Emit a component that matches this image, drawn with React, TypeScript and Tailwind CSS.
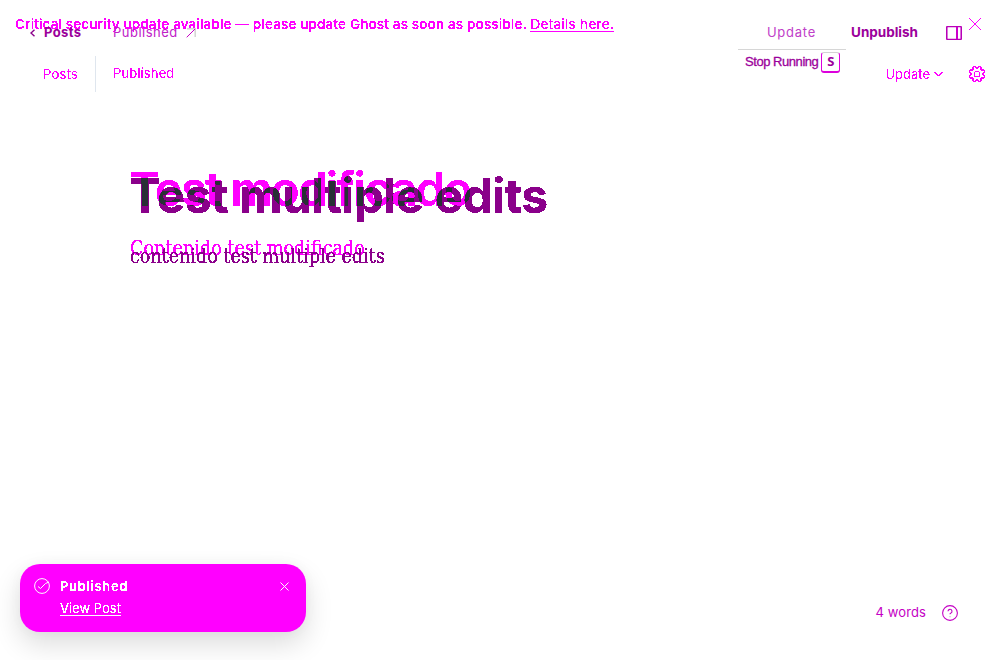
import React from "react";

/* Colour and edge treatments shared by the two compared layers. */
function Filters() {
  return (
    <svg width="0" height="0" className="absolute" aria-hidden="true">
      <filter id="crisp" colorInterpolationFilters="sRGB">
        <feComponentTransfer>
          <feFuncA type="discrete" tableValues="0 0 0 0 1 1 1 1 1 1" />
        </feComponentTransfer>
      </filter>
      <filter id="crisp-heavy" colorInterpolationFilters="sRGB">
        <feComponentTransfer>
          <feFuncA type="discrete" tableValues="0 0 0 1 1 1 1 1 1 1" />
        </feComponentTransfer>
      </filter>
      {/* Where both headings cross, the difference blend leaves a mid tone that is mapped to slate. */}
      <filter id="overlap" colorInterpolationFilters="sRGB">
        <feColorMatrix values="1 0 0 0 0  1 0 0 0 0  1 0 0 0 0  0 0 0 1 0" />
        <feComponentTransfer>
          <feFuncR type="discrete" tableValues=".16 .16 .16 .16 .16 .16 .16 .16 .16 .16 .545 .545 .545 .545 1 1 1 1 1 1" />
          <feFuncG type="discrete" tableValues=".19 .19 .19 .19 .19 .19 .19 .19 .19 .19 0 0 0 0 0 0 0 0 0 0" />
          <feFuncB type="discrete" tableValues=".21 .21 .21 .21 .21 .21 .21 .21 .21 .21 .545 .545 .545 .545 1 1 1 1 1 1" />
          <feFuncA type="discrete" tableValues="0 0 0 1 1 1 1 1 1 1" />
        </feComponentTransfer>
      </filter>
    </svg>
  );
}

function Banner() {
  return (
    <div className="flex h-12 items-center justify-between pl-[15px] pr-[18px] text-[13.5px] text-[#ff00ff]">
      <p className="whitespace-nowrap pt-px [filter:url(#crisp-heavy)]">
        <span className="font-medium tracking-[0.17px]">
          Critical security update available — please update Ghost as soon as possible.
        </span>{" "}
        <a className="tracking-[0.3px] underline underline-offset-2">Details here.</a>
      </p>
      <svg width="14" height="14" viewBox="0 0 14 14" fill="none" stroke="currentColor" strokeWidth="1">
        <path d="M1 1l12 12M13 1L1 13" />
      </svg>
    </div>
  );
}

const TEETH = 8;
const gearPoints = Array.from({ length: TEETH }, (_, i) => {
  const mid = (i * 2 * Math.PI) / TEETH + Math.PI / TEETH;
  return [
    [5.9, -0.27],
    [7.9, -0.21],
    [7.9, 0.21],
    [5.9, 0.27],
  ].map(([r, a]) => `${(9 + r * Math.cos(mid + a)).toFixed(2)},${(9 + r * Math.sin(mid + a)).toFixed(2)}`);
})
  .flat()
  .join(" ");

function Gear() {
  return (
    <svg width="18" height="18" viewBox="0 0 18 18" fill="none" stroke="currentColor" strokeWidth="1.1" strokeLinejoin="round">
      <polygon points={gearPoints} />
      <circle cx="9" cy="9" r="2.8" />
    </svg>
  );
}

function OlderBar() {
  return (
    <div className="flex h-[52px] items-center text-[13px] text-[#ff00ff]">
      <div className="flex h-9 w-24 items-center border-r border-[#dfe6ee] pl-[43px]">
        <span className="pt-px tracking-[0.25px] [filter:url(#crisp)]">Posts</span>
      </div>
      <span className="pl-[17px] tracking-[0.12px] [filter:url(#crisp)]">Published</span>
      <div className="ml-auto flex items-center pr-[14px] [filter:url(#crisp)]">
        <span className="pt-px">Update</span>
        <svg className="ml-1 mr-[25px]" width="9" height="6" viewBox="0 0 9 6" fill="none" stroke="currentColor" strokeWidth="0.9">
          <path d="M.5 1l4 4 4-4" />
        </svg>
        <Gear />
      </div>
    </div>
  );
}

function NewerBar() {
  return (
    <div className="flex h-[49px] items-center pt-4 text-[13px]">
      <svg className="ml-[30px]" width="5" height="8" viewBox="0 0 5 8" fill="none" stroke="#8b008b" strokeWidth="1.4">
        <path d="M4.500.7L1 4l3.500 3.300" />
      </svg>
      <span className="ml-[9px] w-[69px] font-bold tracking-[0.4px] text-[#9b009b]">Posts</span>
      <span className="tracking-[0.5px] text-[#c020c8]">Published</span>
      <svg className="ml-2" width="10" height="10" viewBox="0 0 10 10" fill="none">
        <path d="M1 .8h8.200V9" stroke="#d3d3d3" strokeWidth="1.500" />
        <path d="M.7 9.300L9 1" stroke="#c400c4" strokeWidth="1" />
      </svg>
      <span className="ml-auto tracking-[0.75px] text-[#c040c8]">Update</span>
      <span className="ml-[35px] text-[13.5px] font-bold text-[#9b009b]">Unpublish</span>
      <svg className="ml-7 mr-[38px]" width="16" height="14" viewBox="0 0 16 14" fill="none">
        <rect x=".75" y=".5" width="14.500" height="13" rx="1" stroke="#b800b8" strokeWidth="1.600" />
        <path d="M11 1v12" stroke="#cc00cc" strokeWidth="2" />
      </svg>
    </div>
  );
}

function StopRunning() {
  return (
    <div className="ml-[738px] flex h-[25px] w-[108px] items-center border-t border-[#d6d6d6] pl-[7px] font-['Liberation_Sans',sans-serif] text-[13px] text-[#9b009b]">
      <span className="whitespace-nowrap tracking-[-0.45px] [-webkit-text-stroke:0.3px_#9b009b]">Stop Running</span>
      <kbd className="ml-[3px] mt-px flex h-[21px] w-[19px] items-center justify-center rounded-[3px] border border-b-2 border-[#dc00dc] border-t-[#d3d3d3] font-['Open_Sans',sans-serif] text-[13px] font-bold">
        S
      </kbd>
    </div>
  );
}

function Toast() {
  return (
    <div className="flex h-[68px] w-[286px] items-start rounded-[20px] bg-[#ff00ff] pl-[14px] pr-[17px] pt-[14px] text-[13px] text-white shadow-[0_12px_28px_rgba(0,0,0,0.14),0_0_14px_rgba(0,0,0,0.03)]">
      <svg width="16" height="16" viewBox="0 0 16 16" fill="none" stroke="currentColor" strokeWidth="1">
        <circle cx="8" cy="8" r="7.400" />
        <path d="M4 8.500l2.500 2L11.500 5.500 15 4" />
      </svg>
      <div className="ml-[10px] flex flex-col">
        <span className="h-[22px] leading-4 font-semibold tracking-[0.65px] [filter:url(#crisp)]">Published</span>
        <a className="leading-4 underline underline-offset-2 [filter:url(#crisp)]">View Post</a>
      </div>
      <svg className="ml-auto mt-1" width="9" height="9" viewBox="0 0 9 9" fill="none" stroke="currentColor" strokeWidth="1">
        <path d="M.5.5l8 8M8.500.5l-8 8" />
      </svg>
    </div>
  );
}

function WordCount() {
  return (
    <div className="flex items-center text-[13px] tracking-[0.1px] text-[#c400c4]">
      <span>4 words</span>
      <svg className="ml-4" width="16" height="16" viewBox="0 0 16 16" fill="none" stroke="currentColor" strokeWidth="1.1">
        <circle cx="8" cy="8" r="7.400" />
        <path d="M6 6.300a2 2 0 1 1 2.700 1.900c-.5.2-.7.500-.7 1" />
        <path d="M8 11v1.200" stroke="#d9a0d9" />
      </svg>
    </div>
  );
}

export default function App() {
  return (
    <div className="relative h-[660px] w-[1000px] overflow-hidden bg-white font-['Inter',sans-serif]">
      <Filters />
      <div className="flex h-full flex-col">
        <Banner />
        <OlderBar />
        <main className="grid pl-[129px] pt-[63px]">
          <div className="grid [filter:url(#overlap)]">
            <h1 className="col-start-1 row-start-1 whitespace-nowrap text-[47px] leading-[52px] font-semibold tracking-[-1.6px] text-[#ff00ff]">
              Test modificado
            </h1>
            <h1 className="col-start-1 row-start-1 mt-[7px] whitespace-nowrap text-[48px] leading-[52px] font-bold tracking-[-0.6px] text-[#8b008b] mix-blend-difference">
              Test multiple edits
            </h1>
          </div>
          <div className="ml-px mt-[13px] grid font-['DejaVu_Serif_Condensed','DejaVu_Serif',serif] text-[19.6px] leading-7">
            <p className="col-start-1 row-start-1 text-[#ff00ff] [filter:url(#crisp-heavy)]">Contenido test modificado</p>
            <p className="col-start-1 row-start-1 mt-2 tracking-[-0.04px] text-[#8b008b] [filter:url(#crisp-heavy)]">contenido test multiple edits</p>
          </div>
        </main>
        <footer className="mt-auto flex items-start justify-between pb-7 pl-5 pr-[42px]">
          <Toast />
          <div className="pt-[39px]">
            <WordCount />
          </div>
        </footer>
      </div>
      <div className="absolute inset-x-0 top-0">
        <NewerBar />
        <StopRunning />
      </div>
    </div>
  );
}
